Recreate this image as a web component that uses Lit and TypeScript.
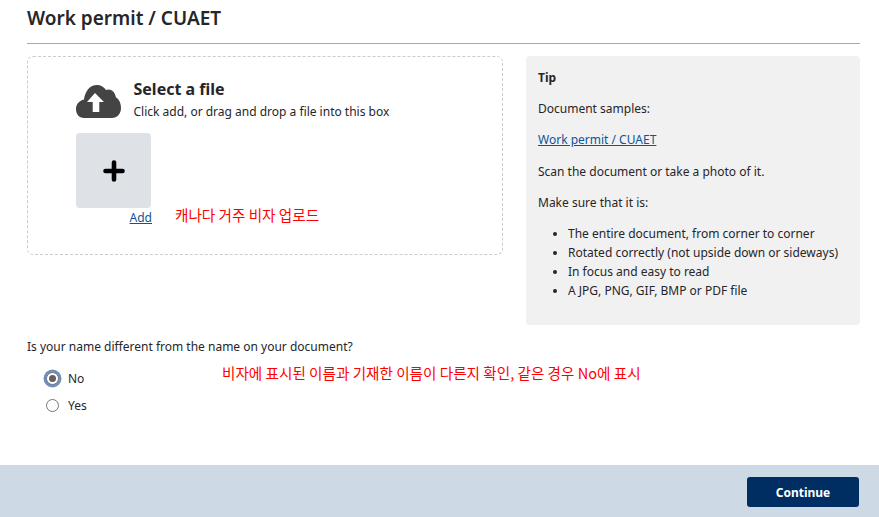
import { LitElement, html, css } from "lit";
import { customElement } from "lit/decorators.js";

@customElement("app-root")
export class AppRoot extends LitElement {
  static styles = css`
    :host { display: block; width: 879px; height: 517px; overflow: hidden; position: relative; background: #fff;
      font-family: "Noto Sans", "Noto Sans CJK KR", sans-serif; font-size: 12px; line-height: 19px; color: #26262a; }
    .main { padding: 0 19px 0 27px; height: 465px; box-sizing: border-box; }
    h1 { margin: 0; box-sizing: border-box; padding-top: 5px; font-size: 19px; line-height: 27px; font-weight: 600; border-bottom: 1px solid #a9a9a9; height: 44px; }
    .cols { display: flex; gap: 23px; margin-top: 12px; align-items: flex-start; }
    .drop { width: 476px; height: 199px; box-sizing: border-box; border: 1px dashed #ccc; border-radius: 6px; padding: 21px 48px 0; position: relative; }
    .head { display: flex; align-items: center; gap: 11.5px; }
    .head svg { width: 46px; height: 34px; flex: none; margin-top: 4px; }
    .head h2 { margin: 0; font-size: 16px; line-height: 22px; font-weight: 700; }
    .head p { margin: 2px 0 0; line-height: 20px; }
    .add { width: 75px; height: 75px; background: #dee1e5; border-radius: 4px; margin-top: 11px; display: flex; align-items: center; justify-content: center; }
    .add svg { width: 22px; height: 22px; }
    .addrow { width: 76px; text-align: right; line-height: 19px; }
    a { color: #0f5499; text-decoration: underline; }
    .note { color: #f00; font-family: "Noto Sans CJK KR", sans-serif; font-size: 14.6px; line-height: 20px; position: absolute; }
    .n1 { left: 147px; top: 148px; }
    .tip { width: 334px; height: 269px; box-sizing: border-box; background: #f1f1f1; border-radius: 4px; padding: 12px 12px 0; }
    .tip p { margin: 0 0 12px; line-height: 19.5px; }
    .tip p.tight { margin-bottom: 11px; }
    .tip b { font-weight: 700; }
    .tip ul { margin: 0; padding-left: 30px; }
    .tip li { line-height: 19.3px; }
    .q { margin: 12px 0 0; line-height: 20px; }
    .radios { position: relative; padding: 8px 0 0 18px; }
    .r { display: flex; align-items: center; gap: 9px; height: 27px; }
    .dot { width: 13px; height: 13px; margin-left: 1px; border-radius: 50%; border: 1px solid #767676; background: #fff; box-sizing: border-box; display: flex; align-items: center; justify-content: center; }
    .dot.on { box-shadow: 0 0 0 2.5px #6f8fc4; }
    .dot.on::after { content: ""; width: 7px; height: 7px; border-radius: 50%; background: #616161; }
    .n2 { left: 195px; top: 6px; }
    footer { height: 52px; background: #cdd9e5; display: flex; justify-content: flex-end; align-items: flex-start; padding: 12px 20px 0 0; box-sizing: border-box; }
    button { width: 112px; height: 30px; border: 0; border-radius: 3px; background: #002d62; color: #fff; font: 700 12px "Noto Sans", sans-serif; padding: 0; }
  `;
  render() {
    return html`
      <div class="main">
        <h1>Work permit / CUAET</h1>
        <div class="cols">
          <div class="drop">
            <div class="head">
              <svg viewBox="0 0 46 34"><path fill="#444" d="M8 33C3 33 0 29 0 24C0 19 3.500 15.500 8 14.500C9 6 14 0 21 0C25 0 28 2 30 5C34 3 39 6 40 12.500C43 14 45 18 45 23C45 29 41 33 36 33Z"/><path fill="#fff" d="M19 8L28 17H23.300V27H16.700V17H11Z"/></svg>
              <div><h2>Select a file</h2><p>Click add, or drag and drop a file into this box</p></div>
            </div>
            <div class="add"><svg viewBox="0 0 22 22"><path d="M11 2.500V19.500M2.500 11H19.500" stroke="#000" stroke-width="4.600" stroke-linecap="round"/></svg></div>
            <div class="addrow"><a href="#">Add</a></div>
            <div class="note n1">캐나다 거주 비자 업로드</div>
          </div>
          <div class="tip">
            <p class="tight"><b>Tip</b></p>
            <p>Document samples:</p>
            <p><a href="#">Work permit / CUAET</a></p>
            <p>Scan the document or take a photo of it.</p>
            <p class="tight">Make sure that it is:</p>
            <ul>
              <li>The entire document, from corner to corner</li>
              <li>Rotated correctly (not upside down or sideways)</li>
              <li>In focus and easy to read</li>
              <li>A JPG, PNG, GIF, BMP or PDF file</li>
            </ul>
          </div>
        </div>
        <p class="q">Is your name different from the name on your document?</p>
        <div class="radios">
          <div class="r"><span class="dot on"></span>No</div>
          <div class="r"><span class="dot"></span>Yes</div>
          <div class="note n2">비자에 표시된 이름과 기재한 이름이 다른지 확인, 같은 경우 No에 표시</div>
        </div>
      </div>
      <footer><button>Continue</button></footer>
    `;
  }
}
